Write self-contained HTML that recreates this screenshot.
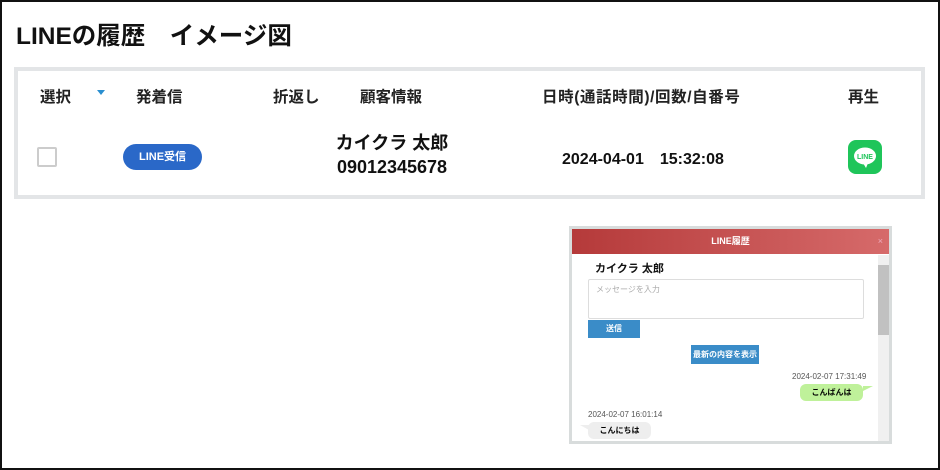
<!DOCTYPE html>
<html><head><meta charset="utf-8"><style>
*{margin:0;padding:0;box-sizing:border-box}
body{width:940px;height:470px;background:#fff;font-family:"Liberation Sans","Noto Sans CJK JP",sans-serif;position:relative;overflow:hidden;}
.a{position:absolute}
.frame{left:0;top:0;width:940px;height:470px;border:2px solid #111}
h1{position:absolute;left:16px;top:17px;font-size:24.5px;font-weight:bold;color:#111;white-space:pre}
.box{left:14px;top:67px;width:911px;height:132px;border:4px solid #e3e5e7}
.th{top:85px;font-size:15.5px;font-weight:bold;color:#222}
.pop{left:569px;top:226px;width:323px;height:218px;border:3px solid #d8dcdc;background:#fff;overflow:hidden}
</style></head><body>
<div class="a frame"></div>
<h1>LINEの履歴　イメージ図</h1>
<div class="a box"></div>
<div class="a th" style="left:40px">選択</div>
<div class="a" style="left:97px;top:90px;width:0;height:0;border-left:4px solid transparent;border-right:4px solid transparent;border-top:5px solid #2a8fd0"></div>
<div class="a th" style="left:136px">発着信</div>
<div class="a th" style="left:273px">折返し</div>
<div class="a th" style="left:360px">顧客情報</div>
<div class="a th" style="left:542px;letter-spacing:0.6px">日時(通話時間)/回数/自番号</div>
<div class="a th" style="left:848px">再生</div>
<div class="a" style="left:37px;top:147px;width:20px;height:20px;border:2px solid #ccc;border-radius:2px"></div>
<div class="a" style="left:123px;top:144px;width:79px;height:26px;background:#2a68c8;border-radius:13px;color:#fff;font-size:11px;font-weight:bold;text-align:center;line-height:26px">LINE受信</div>
<div class="a" style="left:332px;top:131px;font-size:18px;font-weight:bold;color:#111;line-height:24px;text-align:center;width:120px">カイクラ 太郎<br>09012345678</div>
<div class="a" style="left:562px;top:145px;font-size:16px;font-weight:bold;color:#111;white-space:pre">2024-04-01　15:32:08</div>
<div class="a" style="left:848px;top:140px;width:34px;height:34px;background:#1fc55a;border-radius:8px">
<svg width="34" height="34" viewBox="0 0 34 34"><ellipse cx="17" cy="16" rx="11" ry="8.5" fill="#fff"/><path d="M15 23 L18 28 L20 23Z" fill="#fff"/><text x="17" y="19" font-size="7" font-weight="bold" fill="#1fc55a" text-anchor="middle" font-family="Liberation Sans">LINE</text></svg></div>
<div class="a pop">
<div class="a" style="left:0;top:0;width:317px;height:25px;background:linear-gradient(90deg,#b53a3a,#d66a6a);color:#fff;font-size:9px;font-weight:bold;text-align:center;line-height:25px">LINE履歴<span style="position:absolute;right:6px;color:#eab;font-weight:normal">×</span></div>
<div class="a" style="left:306px;top:26px;width:11px;height:190px;background:#f0f0f0"><div style="margin-top:10px;height:70px;background:#c1c1c1"></div></div>
<div class="a" style="left:23px;top:31px;font-size:11px;font-weight:bold;color:#111">カイクラ 太郎</div>
<div class="a" style="left:16px;top:50px;width:276px;height:40px;border:1px solid #ddd;border-radius:2px;font-size:8px;color:#aaa;padding:4px 7px">メッセージを入力</div>
<div class="a" style="left:16px;top:91px;width:52px;height:18px;background:#3a8cc8;color:#fff;font-size:8px;text-align:center;line-height:18px;font-weight:bold">送信</div>
<div class="a" style="left:119px;top:116px;width:68px;height:19px;background:#3a8cc8;color:#fff;font-size:8px;text-align:center;line-height:19px;font-weight:bold">最新の内容を表示</div>
<div class="a" style="left:220px;top:143px;font-size:8px;color:#555">2024-02-07 17:31:49</div>
<div class="a" style="left:228px;top:155px;width:63px;height:17px;background:#bff19a;border-radius:6px;font-size:8px;font-weight:bold;text-align:center;line-height:17px">こんばんは</div>
<div class="a" style="left:291px;top:157px;width:0;height:0;border-top:5px solid #bff19a;border-right:10px solid transparent"></div>
<div class="a" style="left:16px;top:181px;font-size:8px;color:#555">2024-02-07 16:01:14</div>
<div class="a" style="left:16px;top:193px;width:63px;height:17px;background:#eee;border-radius:6px;font-size:8px;font-weight:bold;text-align:center;line-height:17px">こんにちは</div>
<div class="a" style="left:8px;top:196px;width:0;height:0;border-top:5px solid #eee;border-left:9px solid transparent"></div>
</div>
</body></html>
